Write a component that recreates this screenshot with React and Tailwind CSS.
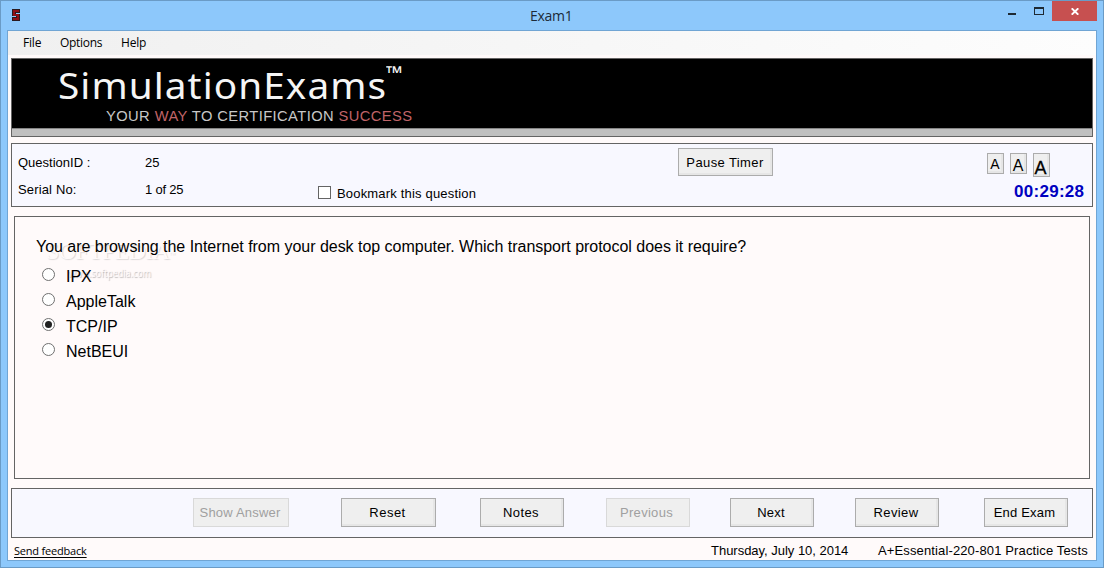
import React from "react";

function Button({ children, className, disabled }) {
  const tone = disabled
    ? "border-[#d9d9d9] bg-[#efefef] text-[#a0a0a0]"
    : "border-[#acacac] bg-[#efefef] text-black shadow-[inset_-2px_-2px_0_#e6e6e6]";
  return (
    <button
      type="button"
      disabled={disabled}
      className={`flex shrink-0 items-center justify-center border whitespace-nowrap text-[13px] leading-4 ${tone} ${className}`}
    >
      {children}
    </button>
  );
}

function Radio({ label, checked }) {
  return (
    <label className="flex h-[25px] items-start">
      <span className="mt-px flex size-[13px] items-center justify-center rounded-full border border-[#707070] bg-white">
        {checked && <span className="size-[7px] rounded-full bg-[#212121]" />}
      </span>
      <span className="ml-[11px] mt-px text-[16px] leading-[18px]">{label}</span>
    </label>
  );
}

function TitleBar() {
  return (
    <header className="flex h-[29px] shrink-0">
      <svg className="ml-[11px] mt-[8px] h-[12px] w-[8px]" viewBox="0 0 8 12" shapeRendering="crispEdges">
        <path d="M0 0H8V4H4V5H8V12H0V8H4V7H0Z" fill="#2a1a20" />
        <path d="M1 1H7V3H3V5H7V11H1V9H5V7H1Z" fill="#8e1016" />
      </svg>
      <div className="ml-[510px] mt-[5px] w-[60px] font-['Open_Sans',sans-serif] text-[14px] leading-[20px] text-[#1c2a38] tracking-[-0.3px]">
        Exam1
      </div>
      <svg className="ml-[417px] mt-[6px] h-[10px] w-[40px]" viewBox="0 0 40 10" shapeRendering="crispEdges">
        <rect x="1" y="6" width="8" height="2" fill="#1e2a33" />
        <path d="M27 0H37V8H27ZM28 2V7H36V2Z" fill="#1e2a33" fillRule="evenodd" />
      </svg>
      <div className="ml-[5px] flex h-[20px] w-[45px] justify-center bg-[#c75050]">
        <svg className="mt-[7px] h-[7px] w-[8px]" viewBox="0 0 8 7">
          <path d="M0.700 0.300L7.300 6.700M7.300 0.300L0.700 6.700" stroke="white" strokeWidth="1.900" />
        </svg>
      </div>
    </header>
  );
}

function Banner() {
  return (
    <section className="mx-[3px] mt-[3px] flex h-[79px] shrink-0 flex-col border border-[#646464] bg-[#c0c0c0]">
      <div className="h-[69px] shrink-0 bg-black">
        <div className="ml-[46px] flex h-[45px] items-start whitespace-nowrap font-['Noto_Sans',sans-serif] text-[#f5f5f5]">
          <span className="mt-[3px] w-[328px] origin-left scale-x-[1.076] text-[36px] leading-[48px] tracking-[1px]">
            SimulationExams
          </span>
          <span className="mt-[4px] origin-left scale-x-[1.150] text-[19px] font-medium leading-[20px]">™</span>
        </div>
        <div className="ml-[94px] mt-[3px] w-[300px] origin-left scale-x-[1.050] whitespace-nowrap text-[14px] leading-[18px] tracking-[0.4px] text-[#c8c8c8]">
          YOUR <span className="text-[#c06468]">WAY</span> TO CERTIFICATION <span className="text-[#c06468]">SUCCESS</span>
        </div>
      </div>
      <div className="h-px bg-[#858585]" />
    </section>
  );
}

function InfoPanel() {
  return (
    <section className="mx-[3px] mt-[6px] flex h-[64px] shrink-0 border border-[#646464] bg-[#f8f8ff] text-[13px] leading-[16px]">
      <dl className="ml-[6px] mt-[11px] grid h-[43px] w-[300px] shrink-0 grid-cols-[127px_1fr] grid-rows-[27px_16px] whitespace-nowrap">
        <dt>QuestionID :</dt>
        <dd>25</dd>
        <dt className="tracking-[0.150px]">Serial No:</dt>
        <dd className="tracking-[-0.2px]">1 of 25</dd>
      </dl>
      <label className="mt-[42px] flex w-[360px] shrink-0 items-start">
        <span className="size-[13px] border border-[#646464] bg-white" />
        <span className="ml-[6px] tracking-[0.180px]">Bookmark this question</span>
      </label>
      <Button className="mt-[4px] h-[28px] w-[95px]">
        <span className="mr-px mt-px tracking-[0.4px]">Pause Timer</span>
      </Button>
      <div className="ml-[214px] flex w-[98px] flex-col">
        <div className="mt-[9px] flex h-[24px] items-start gap-[6px]">
          <Button className="h-[21px] w-[17px]"><span className="mr-px text-[14px]">A</span></Button>
          <Button className="h-[21px] w-[17px]"><span className="mr-px mt-[4px] text-[16px]">A</span></Button>
          <Button className="h-[24px] w-[17px]"><span className="mr-[2px] mt-[5px] text-[18px] [-webkit-text-stroke:0.300px_black]">A</span></Button>
        </div>
        <div className="ml-[27px] mt-[6px] whitespace-nowrap text-[17px] font-bold leading-[18px] tracking-[0.280px] text-[#0000c0]">
          00:29:28
        </div>
      </div>
    </section>
  );
}

function Watermark() {
  return (
    <div
      aria-hidden="true"
      className="pointer-events-none absolute left-[31px] top-[21px] whitespace-nowrap text-[#fffafa] [text-shadow:1px_1px_1px_#dcd8d8]"
    >
      <div className="font-['Liberation_Serif',serif] text-[24px] leading-[26px] tracking-[-0.7px]">
        SOFTPEDIA<sup className="text-[6px]">™</sup>
      </div>
      <div className="ml-[22px] mt-[3px] origin-left scale-x-[0.900] font-['Open_Sans',sans-serif] text-[10px] leading-[12px] [text-shadow:1px_1px_1px_#b8b4b4]">
        www.softpedia.com
      </div>
    </div>
  );
}

function QuestionPanel() {
  return (
    <section className="relative mx-[6px] mt-[9px] h-[263px] shrink-0 border border-[#646464]">
      <Watermark />
      <div className="relative">
        <p className="ml-[21px] pt-[21px] whitespace-nowrap text-[16px] leading-[18px] tracking-[-0.025px]">
          You are browsing the Internet from your desk top computer. Which transport protocol does it require?
        </p>
        <div className="ml-[27px] mt-[11px] flex flex-col">
          <Radio label="IPX" />
          <Radio label="AppleTalk" />
          <Radio label="TCP/IP" checked />
          <Radio label="NetBEUI" />
        </div>
      </div>
    </section>
  );
}

function Controls() {
  return (
    <nav className="mx-[3px] mt-[9px] flex h-[50px] shrink-0 border border-[#646464] bg-[#f8f8ff] pt-[9px] tracking-[0.2px]">
      <Button disabled className="ml-[181px] h-[29px] w-[96px] pr-[2px]">Show Answer</Button>
      <Button className="ml-[52px] h-[29px] w-[95px] pr-[2px] tracking-[0.5px]">Reset</Button>
      <Button className="ml-[44px] h-[29px] w-[84px] pr-[2px] tracking-[0.4px]">Notes</Button>
      <Button disabled className="ml-[42px] h-[29px] w-[84px] pr-[3px] tracking-[0.300px]">Previous</Button>
      <Button className="ml-[40px] h-[29px] w-[84px] pr-[2px]">Next</Button>
      <Button className="ml-[41px] h-[29px] w-[84px] pr-[2px] tracking-[0.4px]">Review</Button>
      <Button className="ml-[45px] h-[29px] w-[84px] pr-[3px]">End Exam</Button>
    </nav>
  );
}

export default function App() {
  return (
    <div className="flex h-[568px] w-[1104px] flex-col overflow-hidden border border-[#6a9bc6] bg-[#8dc8fb] font-['Liberation_Sans',Arial,sans-serif] text-black">
      <TitleBar />
      <main className="mx-[6px] flex h-[531px] shrink-0 flex-col border border-[#70a5d4] bg-[#fffafa]">
        <div className="flex h-[24px] shrink-0 bg-gradient-to-r from-[#f0f0f0] to-[#fdfdfd] font-['Open_Sans',sans-serif] text-[12px] leading-[24px]">
          <span className="ml-[15px] w-[37px] tracking-[-0.2px]">File</span>
          <span className="w-[61px] tracking-[-0.3px]">Options</span>
          <span className="tracking-[-0.2px]">Help</span>
        </div>
        <Banner />
        <InfoPanel />
        <QuestionPanel />
        <Controls />
        <footer className="flex h-[21px] pt-[5px] whitespace-nowrap text-[13px] leading-[16px]">
          <a className="ml-[6px] w-[697px] font-['Open_Sans',sans-serif] text-[11px]">
            <span className="underline underline-offset-2 tracking-[-0.2px]">Send feedback</span>
          </a>
          <span className="w-[167px] tracking-[-0.020px]">Thursday, July 10, 2014</span>
          <span className="tracking-[0.130px]">A+Essential-220-801 Practice Tests</span>
        </footer>
      </main>
    </div>
  );
}
